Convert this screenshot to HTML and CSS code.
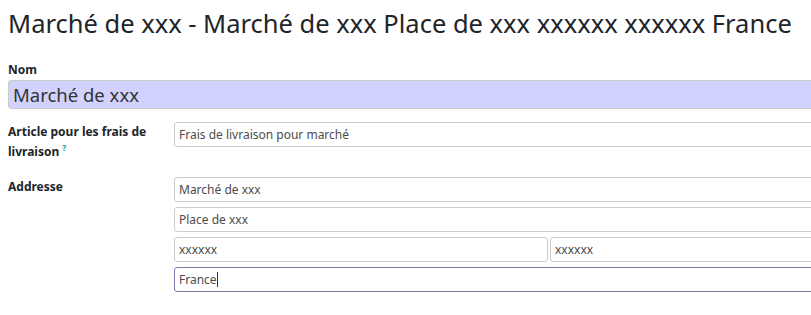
FILE: index.html
```html
<!DOCTYPE html>
<html lang="fr">
<head>
    <meta charset="UTF-8">
    <title>Marché</title>
    <link rel="stylesheet" href="styles.css">
</head>
<body>
<div class="sheet">
    <h1 class="title">Marché de xxx - Marché de xxx Place de xxx xxxxxx xxxxxx France</h1>
    <div class="name-block">
        <label class="name-label">Nom</label>
        <div class="name-input">Marché de xxx</div>
    </div>
    <div class="row">
        <div class="label">Article pour les frais de livraison<sup class="help">?</sup></div>
        <div class="fields">
            <div class="input">Frais de livraison pour marché</div>
        </div>
    </div>
    <div class="row row-address">
        <div class="label">Addresse</div>
        <div class="fields">
            <div class="input">Marché de xxx</div>
            <div class="input">Place de xxx</div>
            <div class="pair">
                <div class="input">xxxxxx</div>
                <div class="input">xxxxxx</div>
            </div>
            <div class="input focus">France<span class="caret"></span></div>
        </div>
    </div>
</div>
</body>
</html>
```

FILE: styles.css
```css
*{margin:0;padding:0;box-sizing:border-box;}
html,body{overflow:hidden;}
body{
    font-family:"Noto Sans","Open Sans",sans-serif;
    color:#212529;
    background:#fff;
}
.sheet{
    width:920px;
    padding:6px 8px 0 8px;
}
.title{
    font-weight:400;
    font-size:25.5px;
    line-height:34px;
    color:#212529;
    margin-bottom:22px;
}
.name-label{
    display:block;
    font-size:12px;
    font-weight:700;
    line-height:16px;
}
.name-input{
    margin-top:2px;
    height:29px;
    background:#d2d2ff;
    border:1px solid #ccc;
    border-radius:3px;
    font-size:18.5px;
    line-height:27px;
    padding-left:4px;
    color:#333;
}
.row{
    display:flex;
    margin-top:13px;
}
.row-address{margin-top:15px;}
.label{
    width:166px;
    flex:none;
    font-size:12px;
    font-weight:700;
    line-height:20px;
    padding-right:12px;
}
.help{
    font-size:8px;
    color:#00a09d;
    margin-left:3px;
    vertical-align:5px;
    line-height:0;
}
.fields{
    flex:1;
    display:flex;
    flex-direction:column;
    gap:5px;
}
.input{
    height:25px;
    border:1px solid #ccc;
    border-radius:3px;
    font-size:12px;
    line-height:23px;
    padding-left:4px;
    color:#4c4c4c;
}
.pair{
    display:flex;
    gap:2px;
}
.pair .input{flex:1;}
.pair .input:first-child{flex:none;width:374px;}
.focus{border-color:#7c7bad;}
.caret{
    display:inline-block;
    width:1px;
    height:15px;
    background:#333;
    vertical-align:-3px;
}
```
